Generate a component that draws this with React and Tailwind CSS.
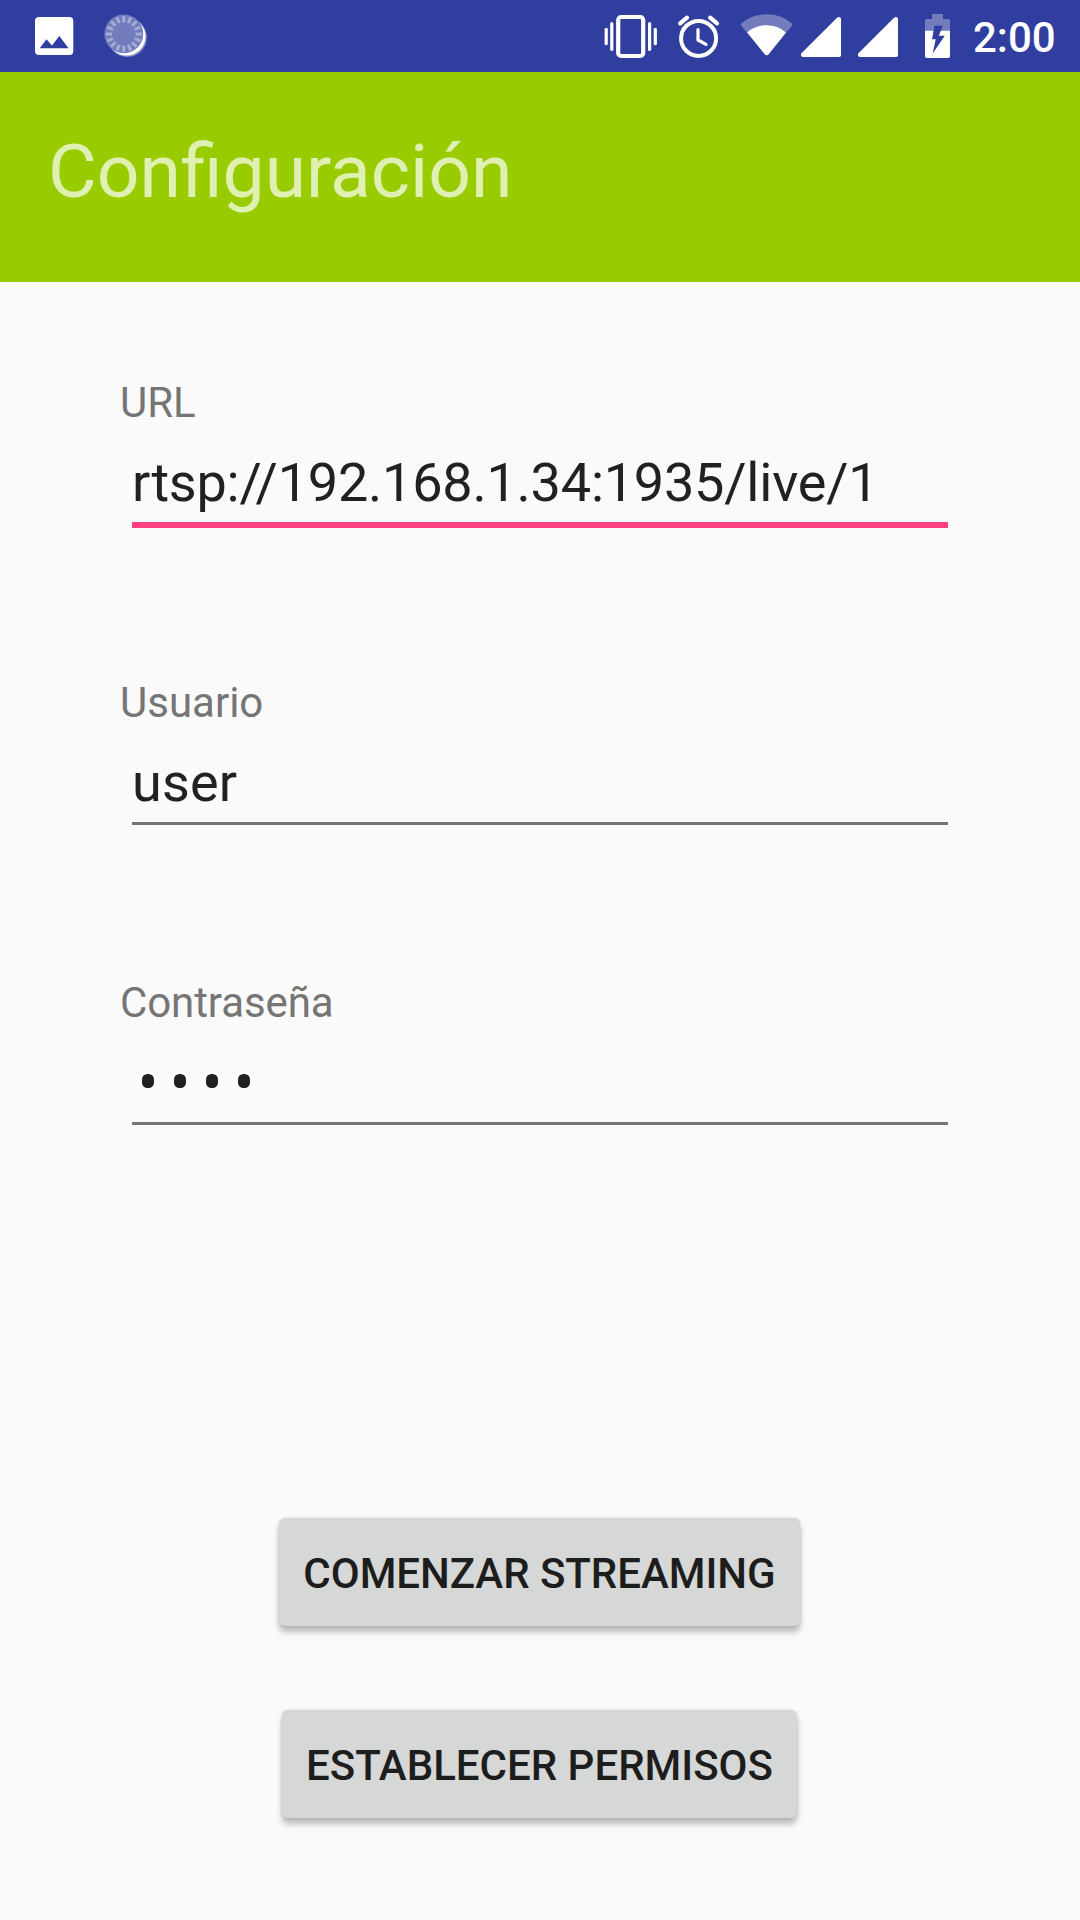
import React from 'react';

const TICKS = Array.from({ length: 16 }, (_, i) => i * 22.5);

function PictureIcon() {
  return (
    <svg className="h-[72px] w-12" viewBox="30 0 48 72">
      <rect x="35" y="17" width="38.3" height="38" rx="4" fill="#fff" />
      <path d="M39.7 48.3L46.5 39.3L52 45.5L59.3 36L68.6 48.3Z" fill="#303f9f" />
    </svg>
  );
}

function SpinnerIcon() {
  return (
    <svg className="ml-[22px] h-[72px] w-[52px]" viewBox="100 0 52 72">
      <circle cx="127.3" cy="37.4" r="19.6" fill="#fff" opacity="0.4" />
      <circle cx="126.6" cy="36.6" r="19" fill="#fff" />
      <circle cx="123.8" cy="33.8" r="19.4" fill="#737dbd" />
      <g stroke="#a4abd5" strokeWidth="3">
        {TICKS.map((a) => (
          <path key={a} d="M123.8 22.2V16" transform={`rotate(${a} 123.8 34)`} />
        ))}
      </g>
    </svg>
  );
}

function VibrateIcon() {
  return (
    <svg className="h-[72px] w-[60px]" viewBox="600 0 60 72">
      <rect x="618.2" y="17" width="25" height="39" rx="3" fill="none" stroke="#fff" strokeWidth="4.2" />
      <g stroke="#fff" strokeWidth="3.2" strokeLinecap="round">
        <path d="M606.2 29.3V43.7M611.8 23.5V49.5M649.6 23.5V49.5M655.3 29.3V43.7" />
      </g>
    </svg>
  );
}

function AlarmIcon() {
  return (
    <svg className="ml-3.5 h-[72px] w-[50px]" viewBox="674 0 50 72">
      <circle cx="698.6" cy="38.4" r="17.5" fill="none" stroke="#fff" strokeWidth="4" />
      <path d="M698 29.5V40L706 44.4" fill="none" stroke="#fff" strokeWidth="3.2" strokeLinecap="round" strokeLinejoin="round" />
      <path d="M680.2 23.4L687 17.7M710.2 17.7L717 23.4" stroke="#fff" strokeWidth="4.2" strokeLinecap="round" />
    </svg>
  );
}

function WifiIcon() {
  return (
    <svg className="ml-3 h-[72px] w-[62px]" viewBox="736 0 62 72">
      <path d="M766.7 55.2Q765.6 55.2 764.8 54.2L741.3 25.8Q740.3 24.4 741.6 23.2Q752 14.3 766.7 14.3T791.6 23.2Q792.9 24.4 791.9 25.8L768.6 54.2Q767.8 55.2 766.7 55.2Z" fill="#737dbd" />
      <path d="M766.7 55.2Q765.6 55.2 764.8 54.2L747.2 32.4Q755.5 25.2 766.7 25.2T786 32.4L768.6 54.2Q767.8 55.2 766.7 55.2Z" fill="#fff" />
    </svg>
  );
}

function SignalIcon({ className }) {
  return (
    <svg className={className} viewBox="0 0 46 72">
      <path d="M3.5 53.3L39.3 17.6Q40.6 16.6 42 17.2Q43 17.8 43 19V55.2Q43 57 41.2 57H5Q3.2 57 3 55.6Q2.8 54.1 3.5 53.3Z" fill="#fff" />
    </svg>
  );
}

function BatteryIcon() {
  return (
    <svg className="ml-[19px] h-[72px] w-[35px]" viewBox="920 0 35 72">
      <path d="M932 14H943V19H948.3Q950 19 950 20.7V31H925V20.7Q925 19 926.7 19H932Z" fill="#737dbd" />
      <path d="M925 30.7H950V56.3Q950 58 948.3 58H926.7Q925 58 925 56.3Z" fill="#fff" />
      <path d="M934.4 25.8H942.8L938.8 35.8H944.8L932.6 53.6L935.8 39.2H932Z" fill="#303f9f" />
    </svg>
  );
}

function StatusBar() {
  return (
    <div className="flex h-[72px] items-start bg-[#303f9f] pl-[30px]">
      <PictureIcon />
      <SpinnerIcon />
      <div className="ml-[448px] flex items-start">
        <VibrateIcon />
        <AlarmIcon />
        <WifiIcon />
        <SignalIcon className="h-[72px] w-[46px]" />
        <SignalIcon className="ml-[11px] h-[72px] w-[46px]" />
        <BatteryIcon />
        <span className="ml-[18px] pt-[13px] text-[42px] leading-[49px] font-medium text-white">2:00</span>
      </div>
    </div>
  );
}

function Field({ label, children, focused, valueClass = '', labelClass = '' }) {
  return (
    <div className="h-[300px]">
      <div className={`text-[42px] leading-[49px] text-[#757575] ${labelClass}`}>{label}</div>
      <div className={`mx-3 mt-6 h-[71px] text-[54px] leading-[63px] text-[#212121] ${valueClass}`}>{children}</div>
      <div className={focused ? 'mx-3 h-1.5 bg-[#ff4081]' : 'mx-3 h-[3px] bg-[#757575]'} />
    </div>
  );
}

function PasswordDots() {
  return (
    <div className="flex gap-5 pt-[23px] pl-2.5">
      {[0, 1, 2, 3].map((i) => (
        <span key={i} className="h-3.5 w-3 rounded-[5.5px] bg-[#212121]" />
      ))}
    </div>
  );
}

function Button({ className, children }) {
  return (
    <button className={`${className} h-[108px] rounded-[6px] bg-[#d6d8d7] pt-0.5 text-[42px] leading-[49px] font-medium whitespace-nowrap text-[#1d1d1d] shadow-[0_6px_6px_rgba(0,0,0,0.26),0_0_3px_rgba(0,0,0,0.12)]`}>
      {children}
    </button>
  );
}

export default function App() {
  return (
    <div className="flex h-[1920px] w-[1080px] flex-col bg-[#fafafa] font-['Roboto',sans-serif]">
      <StatusBar />
      <header className="h-[210px] bg-[#99cc00] pt-[55px] pl-12">
        <h1 className="text-[75px] leading-[88px] text-[#e0f0b3]">Configuración</h1>
      </header>
      <main className="flex flex-col px-[120px] pt-24">
        <Field label="URL" focused valueClass="tracking-[-0.22px]">rtsp://192.168.1.34:1935/live/1</Field>
        <Field label="Usuario" valueClass="tracking-[0.2px]">user</Field>
        <Field label="Contraseña" labelClass="tracking-[-0.1px]"><PasswordDots /></Field>
        <div className="mt-60 mr-px flex flex-col items-center gap-[84px]">
          <Button className="w-[521px] tracking-[-0.04px]">COMENZAR STREAMING</Button>
          <Button className="w-[515px]">ESTABLECER PERMISOS</Button>
        </div>
      </main>
    </div>
  );
}
